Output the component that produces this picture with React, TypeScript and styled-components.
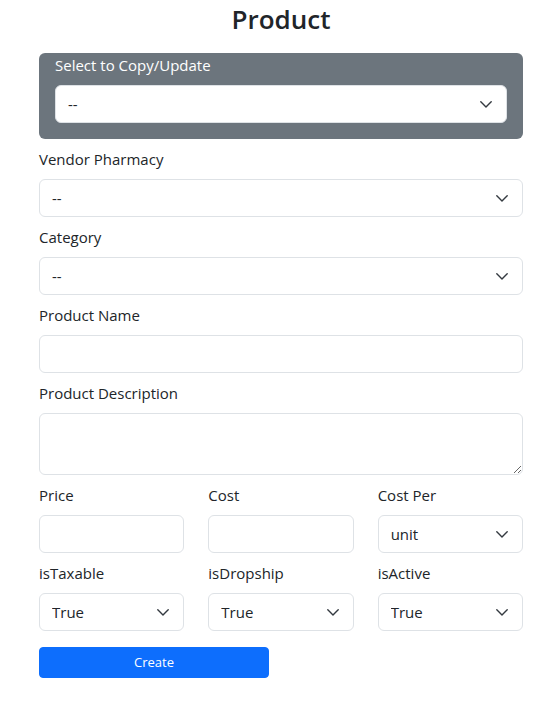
import React from "react";
import styled, { createGlobalStyle } from "styled-components";

const Global = createGlobalStyle`
  html, body { margin: 0; padding: 0; background: #fff; }
  body {
    font-family: "Open Sans", "Noto Sans", "Liberation Sans", sans-serif;
    font-size: 16px;
    line-height: 1.5;
    color: #212529;
  }
  * { box-sizing: border-box; }
`;

const Page = styled.div`
  width: 560px;
  padding: 0 37px 0 39px;
`;

const Title = styled.h2`
  margin: 0 0 15px;
  font-size: 26px;
  font-weight: 600;
  line-height: 38px;
  text-align: center;
  color: #212529;
`;

const CopyBox = styled.div`
  background: #6c757d;
  border-radius: 6px;
  padding: 0 16px 16px;
`;

const Group = styled.div`
  margin-bottom: 8px;
`;

const Label = styled.label<{ $light?: boolean }>`
  display: block;
  margin-bottom: 8px;
  font-size: 15px;
  line-height: 24px;
  color: ${(p) => (p.$light ? "#ffffff" : "#212529")};
`;

const Fields = styled.div`
  margin-top: 8px;
`;

const controlBase = `
  display: block;
  width: 100%;
  height: 38px;
  padding: 6px 12px;
  font-family: "Open Sans", "Noto Sans", "Liberation Sans", sans-serif;
  font-size: 15px;
  line-height: 24px;
  color: #212529;
  background: #fff;
  border: 1px solid #dee2e6;
  border-radius: 6px;
  outline: none;
`;

const Input = styled.input`
  ${controlBase}
`;

const TextArea = styled.textarea`
  ${controlBase}
  height: 62px;
  resize: vertical;
`;

const SelectWrap = styled.div`
  position: relative;
`;

const NativeSelect = styled.select`
  ${controlBase}
  appearance: none;
  -webkit-appearance: none;
  padding-right: 36px;
`;

const Chevron = styled.svg`
  position: absolute;
  right: 15px;
  top: 16px;
  width: 12px;
  height: 7px;
  pointer-events: none;
`;

const Row = styled.div`
  display: grid;
  grid-template-columns: repeat(3, 1fr);
  column-gap: 24px;
`;

const HalfRow = styled.div`
  display: grid;
  grid-template-columns: repeat(2, 1fr);
  column-gap: 24px;
  margin-top: 8px;
`;

const Button = styled.button`
  height: 31px;
  padding: 4px 8px;
  font-family: "Open Sans", "Noto Sans", "Liberation Sans", sans-serif;
  font-size: 13px;
  line-height: 21px;
  color: #fff;
  background: #0d6efd;
  border: 1px solid #0d6efd;
  border-radius: 4px;
`;

function Select({ options, value }: { options: string[]; value: string }) {
  return (
    <SelectWrap>
      <NativeSelect defaultValue={value}>
        {options.map((o) => (
          <option key={o} value={o}>
            {o}
          </option>
        ))}
      </NativeSelect>
      <Chevron viewBox="0 0 12 7">
        <path
          d="M0.8 0.8 6 6 11.2 0.8"
          fill="none"
          stroke="#343a40"
          strokeWidth="1.4"
          strokeLinecap="round"
          strokeLinejoin="round"
        />
      </Chevron>
    </SelectWrap>
  );
}

export default function App() {
  return (
    <>
      <Global />
      <Page>
        <Title>Product</Title>
        <CopyBox>
          <Label $light>Select to Copy/Update</Label>
          <Select options={["--"]} value="--" />
        </CopyBox>
        <Fields>
          <Group>
            <Label>Vendor Pharmacy</Label>
            <Select options={["--"]} value="--" />
          </Group>
          <Group>
            <Label>Category</Label>
            <Select options={["--"]} value="--" />
          </Group>
          <Group>
            <Label>Product Name</Label>
            <Input type="text" />
          </Group>
          <Group>
            <Label>Product Description</Label>
            <TextArea rows={2} />
          </Group>
          <Row>
            <Group>
              <Label>Price</Label>
              <Input type="text" />
            </Group>
            <Group>
              <Label>Cost</Label>
              <Input type="text" />
            </Group>
            <Group>
              <Label>Cost Per</Label>
              <Select options={["unit"]} value="unit" />
            </Group>
          </Row>
          <Row>
            <Group>
              <Label>isTaxable</Label>
              <Select options={["True", "False"]} value="True" />
            </Group>
            <Group>
              <Label>isDropship</Label>
              <Select options={["True", "False"]} value="True" />
            </Group>
            <Group>
              <Label>isActive</Label>
              <Select options={["True", "False"]} value="True" />
            </Group>
          </Row>
          <HalfRow>
            <Button type="button">Create</Button>
          </HalfRow>
        </Fields>
      </Page>
    </>
  );
}
